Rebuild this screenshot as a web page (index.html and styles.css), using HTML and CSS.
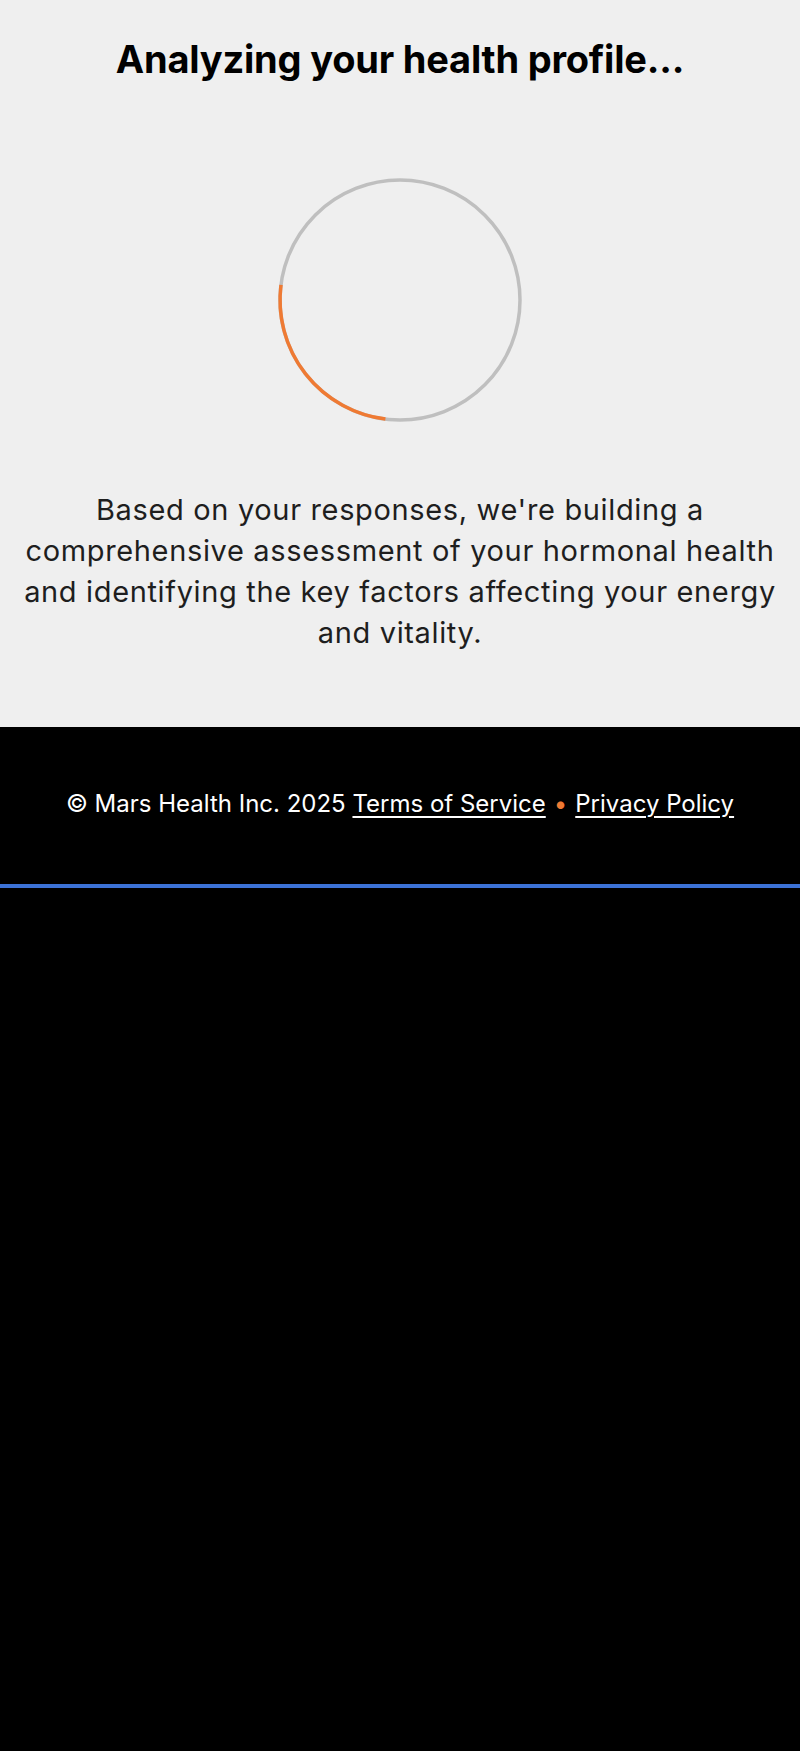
FILE: index.html
```html
<!DOCTYPE html>
<html lang="en">
<head>
<meta charset="utf-8">
<title>Analyzing your health profile</title>
<link rel="stylesheet" href="styles.css">
</head>
<body>
<main class="hero">
  <h1 class="title">Analyzing your health profile...</h1>
  <div class="spinner">
    <svg width="248" height="248" viewBox="0 0 248 248">
      <circle cx="124" cy="124" r="120" fill="none" stroke="#bfbfbf" stroke-width="3.5"/>
      <path d="M 4.99 108.9 A 120 120 0 0 0 109.4 243.1" fill="none" stroke="#ef7a33" stroke-width="3.5"/>
    </svg>
  </div>
  <p class="desc">Based on your responses, we're building a comprehensive assessment of your hormonal health and identifying the key factors affecting your energy and vitality.</p>
</main>
<footer class="footer">
  <p class="legal">© Mars Health Inc. 2025 <a href="#">Terms of Service</a><span class="dot">•</span><a href="#">Privacy Policy</a></p>
</footer>
<div class="bar"></div>
<div class="rest"></div>
</body>
</html>
```

FILE: styles.css
```css
html, body {
  margin: 0;
  padding: 0;
  background: #000;
}
body {
  font-family: Inter, "Noto Sans", sans-serif;
}
.hero {
  background: #efefef;
  height: 727px;
  box-sizing: border-box;
  padding-top: 36px;
  display: flex;
  flex-direction: column;
  align-items: center;
}
.title {
  margin: 0;
  font-size: 38px;
  line-height: 46px;
  font-weight: 700;
  color: #000;
  letter-spacing: -0.2px;
}
.spinner {
  margin-top: 94px;
  width: 248px;
  height: 248px;
}
.spinner svg {
  display: block;
}
.desc {
  margin: 65px 0 0;
  padding: 0 20px;
  text-align: center;
  font-size: 29px;
  line-height: 41px;
  letter-spacing: 0.65px;
  color: #1e1e1e;
}
.footer {
  background: #000;
  height: 157px;
  display: flex;
  align-items: center;
  justify-content: center;
}
.legal {
  margin: 0;
  margin-top: -4px;
  color: #fff;
  font-size: 24px;
  line-height: 30px;
}
.legal a {
  color: #fff;
  text-decoration: underline;
  text-underline-offset: 4px;
  text-decoration-thickness: 2px;
}
.dot {
  color: #ef7a33;
  margin: 0 8px;
}
.bar {
  height: 4px;
  background: #3c72d6;
}
.rest {
  height: 863px;
  background: #000;
}
```
